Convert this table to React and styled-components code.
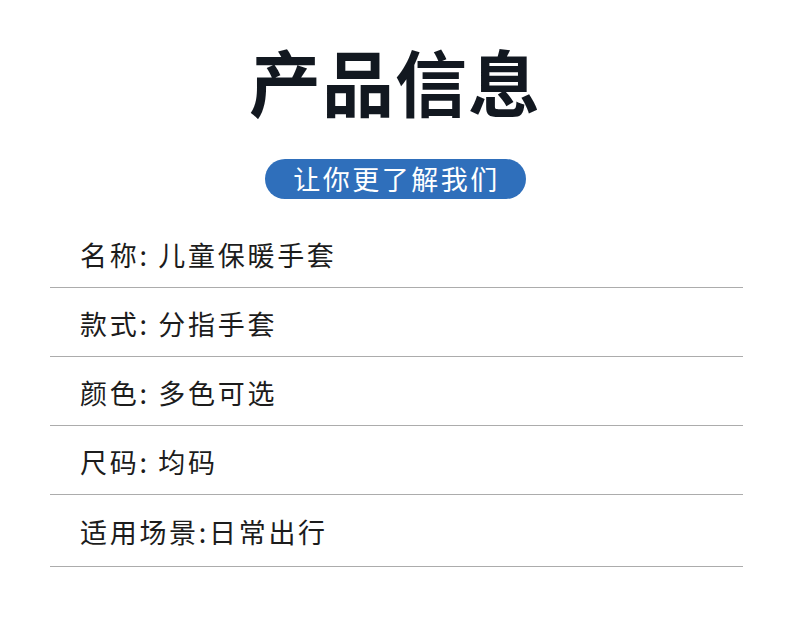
import React from 'react';
import styled, { createGlobalStyle } from 'styled-components';

const GlobalStyle = createGlobalStyle`
  body {
    margin: 0;
    background: #fff;
    font-family: "Noto Sans CJK SC", "Noto Sans", sans-serif;
  }
`;

const Page = styled.main`
  width: 790px;
  height: 624px;
  display: flex;
  flex-direction: column;
  align-items: center;
  background: #fff;
`;

const Title = styled.h1`
  margin: 42px 0 0;
  font-size: 72px;
  line-height: 76px;
  font-weight: 700;
  color: #121820;
  letter-spacing: 1px;
`;

const Badge = styled.div`
  margin-top: 41px;
  width: 261px;
  height: 40px;
  border-radius: 20px;
  background: #2f6fbb;
  color: #fff;
  font-size: 27px;
  font-weight: 400;
  line-height: 40px;
  text-align: center;
  letter-spacing: 2.5px;
  text-indent: 3px;
`;

const InfoList = styled.ul`
  list-style: none;
  margin: 20px 0 0 50px;
  padding: 0;
  width: 693px;
  align-self: flex-start;
`;

const InfoRow = styled.li`
  height: ${p => (p.$last ? 69 : 66)}px;
  display: flex;
  align-items: center;
  padding: 2px 0 0 30px;
  border-bottom: 1px solid #acacac;
  font-size: 27px;
  font-weight: 400;
  letter-spacing: 2.7px;
  color: #1c1c1c;
`;

const rows = [
  '名称: 儿童保暖手套',
  '款式: 分指手套',
  '颜色: 多色可选',
  '尺码: 均码',
  '适用场景:日常出行',
];

export default function App() {
  return (
    <Page>
      <GlobalStyle />
      <Title>产品信息</Title>
      <Badge>让你更了解我们</Badge>
      <InfoList>
        {rows.map((text, i) => (
          <InfoRow key={i} $last={i === rows.length - 1}>{text}</InfoRow>
        ))}
      </InfoList>
    </Page>
  );
}
